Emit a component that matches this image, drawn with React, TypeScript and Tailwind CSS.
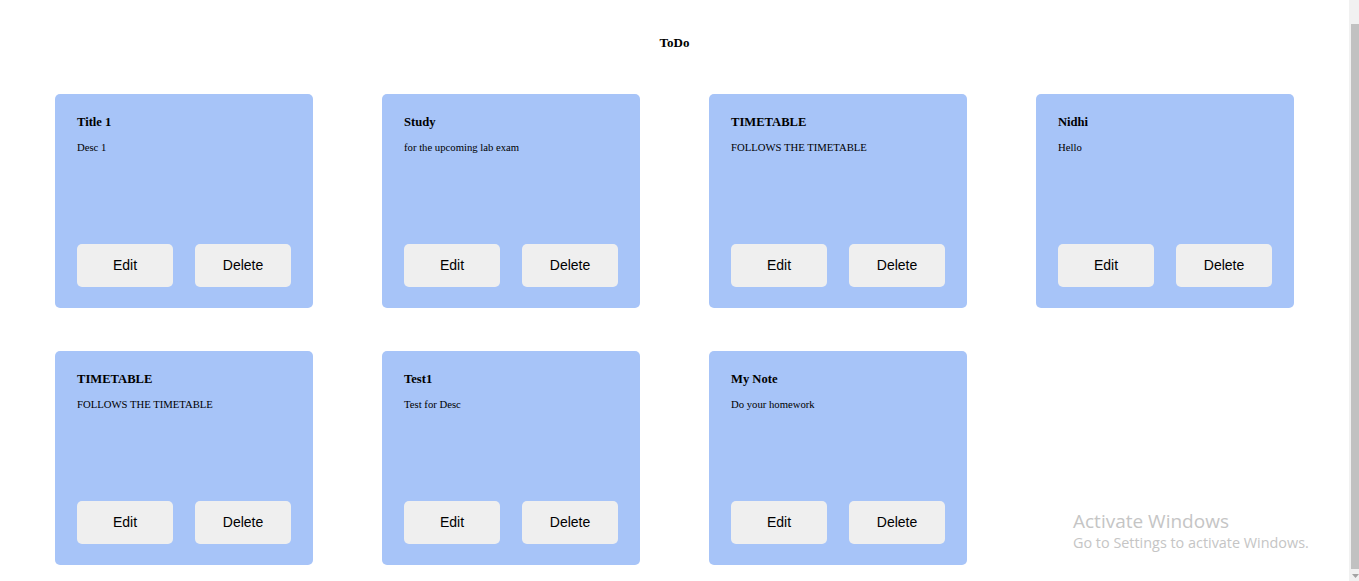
import React from "react";

const notes = [
  { t: "Title 1", d: "Desc 1" },
  { t: "Study", d: "for the upcoming lab exam" },
  { t: "TIMETABLE", d: "FOLLOWS THE TIMETABLE" },
  { t: "Nidhi", d: "Hello" },
  { t: "TIMETABLE", d: "FOLLOWS THE TIMETABLE" },
  { t: "Test1", d: "Test for Desc" },
  { t: "My Note", d: "Do your homework" },
];

export default function App() {
  return (
    <div className="relative w-[1359px] h-[581px] overflow-hidden bg-white">
      <div className="w-[1349px] h-full">
        <h1 className="pt-[35px] text-center text-[13px] leading-[16px] font-bold text-black [font-family:'Liberation_Serif',serif]">
          ToDo
        </h1>
        <div className="grid grid-cols-[repeat(4,258px)] gap-x-[69px] gap-y-[43px] pl-[55px] pt-[43px]">
          {notes.map((n, i) => (
            <div
              key={i}
              className="flex h-[214px] flex-col rounded-[5px] bg-[#a7c4f8] px-[22px] pt-[20px] pb-[21px]"
            >
              <div className="text-[12.6px] leading-[16px] font-bold text-black [font-family:'Liberation_Serif',serif]">
                {n.t}
              </div>
              <div className="mt-[11px] text-[10.7px] leading-[13px] text-black [font-family:'Liberation_Serif',serif]">
                {n.d}
              </div>
              <div className="mt-auto flex gap-[22px]">
                <button className="h-[43px] w-[96px] rounded-[5px] bg-[#efefef] text-[14px] text-black [font-family:'Liberation_Sans',Arial,sans-serif]">
                  Edit
                </button>
                <button className="h-[43px] w-[96px] rounded-[5px] bg-[#efefef] text-[14px] text-black [font-family:'Liberation_Sans',Arial,sans-serif]">
                  Delete
                </button>
              </div>
            </div>
          ))}
        </div>
      </div>
      {/* scrollbar */}
      <div className="absolute right-0 top-0 h-full w-[10px] bg-[#f1f1f1]">
        <div className="absolute left-[2px] right-0 top-[24px] bottom-[12px] bg-[#c1c1c1]" />
        <svg className="absolute bottom-[3px] left-[3px]" width="7" height="4" viewBox="0 0 7 4">
          <path d="M0 0 L7 0 L3.5 4 Z" fill="#a3a3a3" />
        </svg>
      </div>
      {/* watermark */}
      <div className="absolute left-[1073px] top-[509px] text-[#c5c5c5] [font-family:'Open_Sans',sans-serif]">
        <div className="text-[19px] leading-[24px]">Activate Windows</div>
        <div className="text-[14.4px] leading-[20px]">Go to Settings to activate Windows.</div>
      </div>
    </div>
  );
}
